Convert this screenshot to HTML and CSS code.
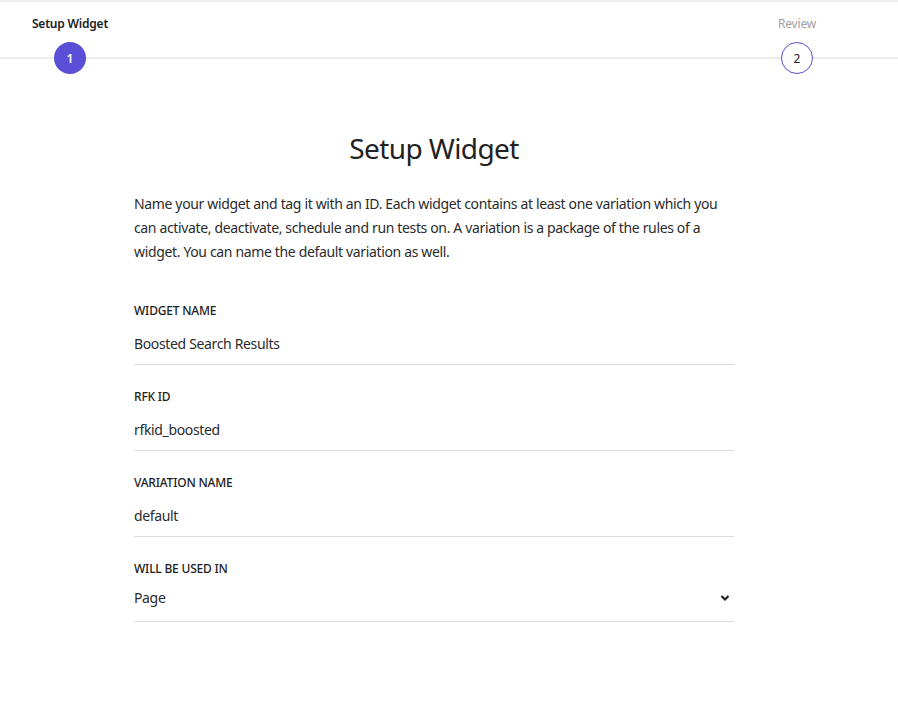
FILE: index.html
```html
<!DOCTYPE html>
<html lang="en">
<head>
<meta charset="utf-8">
<title>Setup Widget</title>
<link rel="stylesheet" href="styles.css">
</head>
<body>
<header class="stepper">
  <div class="step step-active">
    <div class="step-label">Setup Widget</div>
    <div class="step-circle">1</div>
  </div>
  <div class="step step-next">
    <div class="step-label">Review</div>
    <div class="step-circle">2</div>
  </div>
</header>
<main class="content">
  <h1 class="title">Setup Widget</h1>
  <p class="intro">Name your widget and tag it with an ID. Each widget contains at least one variation which you can activate, deactivate, schedule and run tests on. A variation is a package of the rules of a widget. You can name the default variation as well.</p>
  <div class="field">
    <div class="field-label">WIDGET NAME</div>
    <div class="field-value">Boosted Search Results</div>
  </div>
  <div class="field">
    <div class="field-label">RFK ID</div>
    <div class="field-value">rfkid_boosted</div>
  </div>
  <div class="field">
    <div class="field-label">VARIATION NAME</div>
    <div class="field-value">default</div>
  </div>
  <div class="field field-select">
    <div class="field-label">WILL BE USED IN</div>
    <div class="field-value select-row">
      <span>Page</span>
      <svg class="chevron" width="10" height="8" viewBox="0 0 10 8"><path d="M1.5 2 L5 5.5 L8.5 2" fill="none" stroke="#222" stroke-width="2.2"/></svg>
    </div>
  </div>
</main>
</body>
</html>
```
FILE: styles.css
```css
* { box-sizing: border-box; }
html, body { margin: 0; padding: 0; background: #fff; }
body {
  font-family: "Noto Sans", "Open Sans", Arial, sans-serif;
  color: #2b2b2b;
  border-top: 2px solid #eeeeee;
  letter-spacing: -0.35px;
}
.stepper {
  position: relative;
  display: flex;
  justify-content: space-between;
  padding: 13px 51px 0 20px;
  height: 74px;
}
.stepper::before {
  content: "";
  position: absolute;
  left: 0;
  right: 0;
  top: 55px;
  height: 2px;
  background: #ececec;
}
.step {
  position: relative;
  width: 100px;
  display: flex;
  flex-direction: column;
  align-items: center;
}
.step-label {
  font-size: 12px;
  line-height: 18px;
  height: 18px;
  font-weight: 600;
  color: #222;
  letter-spacing: -0.2px;
}
.step-next .step-label { color: #a0a0a0; font-weight: 400; }
.step-circle {
  margin-top: 9px;
  width: 32px;
  height: 32px;
  border-radius: 50%;
  display: flex;
  align-items: center;
  justify-content: center;
  font-size: 12px;
  background: #5a4fd6;
  color: #fff;
  font-weight: 600;
  letter-spacing: 0;
}
.step-next .step-circle {
  background: #fff;
  border: 1px solid #5a4fd6;
  color: #222;
  font-weight: 400;
}
.content {
  width: 600px;
  margin-left: 134px;
  padding-top: 52px;
}
.title {
  margin: 0;
  text-align: center;
  font-size: 28px;
  line-height: 40px;
  font-weight: 400;
  color: #222;
  letter-spacing: -0.6px;
}
.intro {
  margin: 24px 0 0;
  font-size: 14px;
  line-height: 24px;
  color: #2b2b2b;
}
.field {
  margin-top: 38px;
  border-bottom: 1px solid #dcdcdc;
}
.field + .field { margin-top: 23px; }
.field-label {
  font-size: 12px;
  line-height: 18px;
  font-weight: 500;
  color: #222;
  letter-spacing: -0.2px;
}
.field-value {
  margin-top: 14px;
  font-size: 14px;
  line-height: 20px;
  padding-bottom: 10px;
}
.field-select .field-value { margin-top: 10px; padding-bottom: 13px; }
.select-row {
  display: flex;
  justify-content: space-between;
  align-items: center;
}
.chevron { margin-right: 4px; }
```
